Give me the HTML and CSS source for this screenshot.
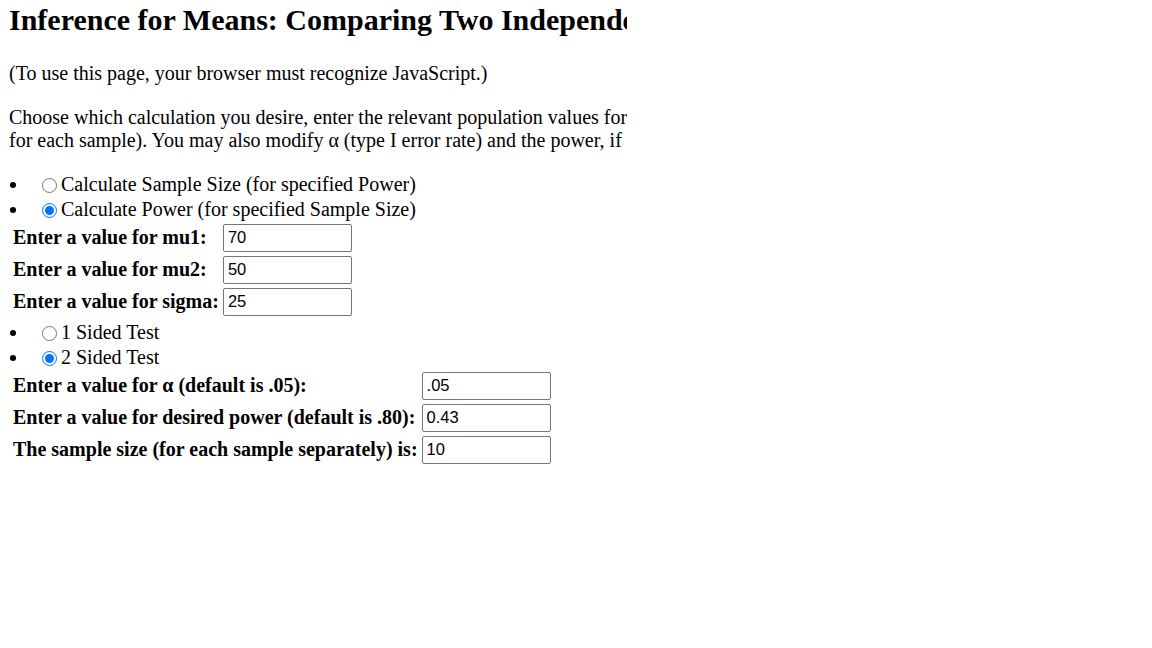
FILE: index.html
```html
<!DOCTYPE html>
<html lang="en">
<head>
    <meta charset="UTF-8">
    <title>Inference for Means: Comparing Two Independent Samples</title>
    <link rel="stylesheet" href="styles.css">
</head>
<body>

    <!-- Calculator frame (content wider than the frame is clipped) -->
    <div class="frame">
        <div class="page">
            <h2 class="title">Inference for Means: Comparing Two Independent Samples</h2>

            <p>(To use this page, your browser must recognize JavaScript.)</p>

            <p class="intro">Choose which calculation you desire, enter the relevant population values for mu1 (mean of population 1), mu2 (mean of population 2), and sigma (common standard deviation) and, if calculating power, a sample size (assumed the same<br>for each sample). You may also modify &alpha; (type I error rate) and the power, if relevant. After making your entries, hit the calculate button at the bottom.</p>

            <form id="calc-form">
                <ul class="choices calc-type">
                    <li><input type="radio" name="calc" value="n">Calculate Sample Size (for specified Power)</li>
                    <li><input type="radio" name="calc" value="power" checked>Calculate Power (for specified Sample Size)</li>
                </ul>

                <table class="fields">
                    <tr>
                        <td class="label">Enter a value for mu1:</td>
                        <td><input type="text" id="mu1" value="70"></td>
                    </tr>
                    <tr>
                        <td class="label">Enter a value for mu2:</td>
                        <td><input type="text" id="mu2" value="50"></td>
                    </tr>
                    <tr>
                        <td class="label">Enter a value for sigma:</td>
                        <td><input type="text" id="sigma" value="25"></td>
                    </tr>
                </table>

                <ul class="choices test-type">
                    <li><input type="radio" name="sides" value="1">1 Sided Test</li>
                    <li><input type="radio" name="sides" value="2" checked>2 Sided Test</li>
                </ul>

                <table class="fields">
                    <tr>
                        <td class="label">Enter a value for &alpha; (default is .05):</td>
                        <td><input type="text" id="alpha" value=".05"></td>
                    </tr>
                    <tr>
                        <td class="label">Enter a value for desired power (default is .80):</td>
                        <td><input type="text" id="power" value="0.43"></td>
                    </tr>
                    <tr>
                        <td class="label">The sample size (for each sample separately) is:</td>
                        <td><input type="text" id="size" value="10"></td>
                    </tr>
                </table>
            </form>
        </div>
    </div>

</body>
</html>
```

FILE: styles.css
```css
/* Page */
body {
    margin: 0;
    background-color: #ffffff;
    color: #000000;
    font-family: "Liberation Serif", "Times New Roman", serif;
    font-size: 20px;
    line-height: 23px;
}

/* The frame only shows the left part of the page */
.frame {
    width: 627px;
    height: 648px;
    overflow: hidden;
    box-sizing: border-box;
    padding: 3px 0 0 9px;
}

.page {
    width: 1100px;
}

.title {
    margin: 0 0 24px;
    font-size: 30px;
    line-height: 34.5px;
    font-weight: bold;
    white-space: nowrap;
}

p {
    margin: 0 0 21px;
}

.intro {
    white-space: nowrap;
    margin-bottom: 20px;
}

/* Radio lists */
.choices {
    margin: 0;
    padding-left: 20px;
}

.calc-type {
    margin-bottom: -1px;
}

.test-type {
    margin: 1px 0 -1px;
}

.choices li {
    line-height: 25px;
    height: 25px;
}

.choices input {
    width: 15px;
    height: 15px;
    margin: 0 4px 0 13px;
    vertical-align: -2px;
}

/* Value tables */
.fields {
    border-spacing: 2px;
    margin-left: 1px;
}

.fields td {
    padding: 1px;
    vertical-align: middle;
}

.fields .label {
    font-weight: bold;
    white-space: nowrap;
}

.fields input {
    box-sizing: border-box;
    width: 129px;
    height: 28px;
    padding: 1px 4px;
    border: 1px solid #767676;
    border-radius: 2px;
    font-family: "Liberation Sans", Arial, sans-serif;
    font-size: 16.5px;
    color: #000000;
    display: block;
}
```
